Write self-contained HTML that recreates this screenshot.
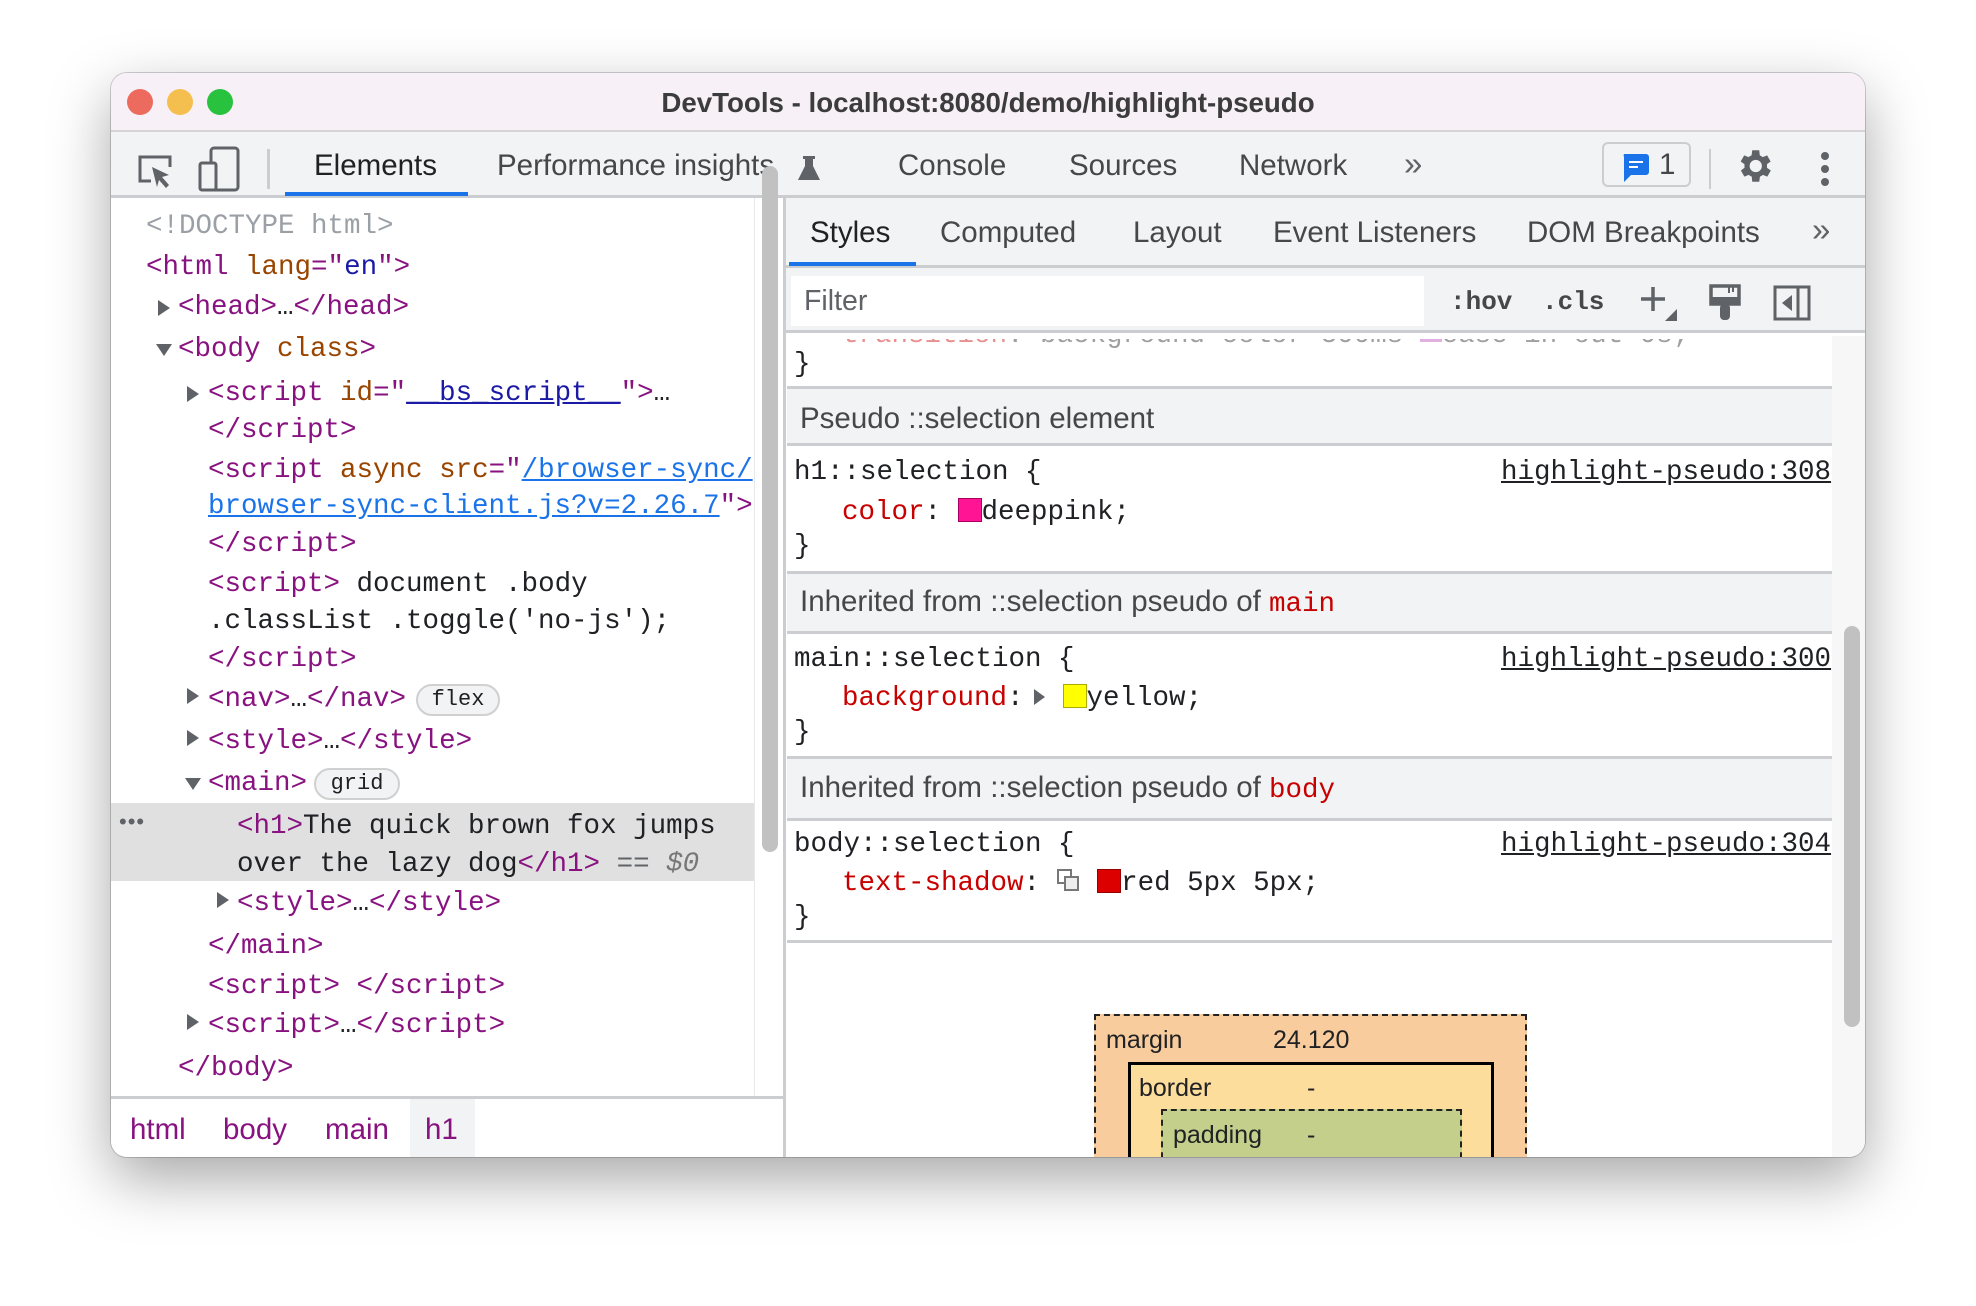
<!DOCTYPE html>
<html><head><meta charset="utf-8"><style>
*{box-sizing:border-box;margin:0;padding:0}
body{width:1976px;height:1306px;background:#fff;position:relative;overflow:hidden;font-family:"Liberation Sans",sans-serif;color:#202124}
.win{position:absolute;left:111px;top:73px;width:1754px;height:1084px;border-radius:16px;overflow:hidden;background:#fff;box-shadow:0 22px 60px rgba(0,0,0,.35),0 0 0 1px rgba(0,0,0,.18)}
.a{position:absolute;white-space:pre}
.m{font-family:"Liberation Mono",monospace;font-size:27.5px;line-height:40px;height:40px;margin-top:3px}
.s{font-size:29.5px;line-height:40px;height:40px}
.t{color:#881280}.an{color:#994500}.av{color:#1a1aa6}.lk{color:#1a73e8;text-decoration:underline}
.p{color:#c80000}
.tri{position:absolute;width:0;height:0;border-top:8px solid transparent;border-bottom:8px solid transparent;border-left:12px solid #5f6368;margin-top:3px}
.trd{position:absolute;width:0;height:0;border-left:8px solid transparent;border-right:8px solid transparent;border-top:12px solid #5f6368;margin-top:3px}
.hdr{position:absolute;left:0;width:1045px;background:#f1f3f4;border-top:3px solid #cbcdd1;border-bottom:3px solid #cbcdd1}
.pill{position:absolute;border:2px solid #d0d0d0;border-radius:16px;background:#f1f3f4;font-family:"Liberation Mono",monospace;font-size:22px;text-align:center;color:#202124}
.bx{font-size:25px}
</style></head><body>
<div class="win">
 <div class="a" style="left:0;top:0;width:1754px;height:59px;background:#f7f0f7;border-bottom:2px solid #d6d3d6"></div>
 <div class="a" style="left:16px;top:16px;width:26px;height:26px;border-radius:50%;background:#ed6a5e"></div>
 <div class="a" style="left:56px;top:16px;width:26px;height:26px;border-radius:50%;background:#f5bf4f"></div>
 <div class="a" style="left:96px;top:16px;width:26px;height:26px;border-radius:50%;background:#29c23f"></div>
 <div class="a" style="left:0;top:11px;width:1754px;text-align:center;font-size:27.7px;font-weight:bold;color:#3c3c3c;line-height:38px">DevTools - localhost:8080/demo/highlight-pseudo</div>
 <div class="a" style="left:0;top:59px;width:1754px;height:66px;background:#f1f3f4;border-bottom:3px solid #cbcdd1"></div>
 <svg class="a" style="left:24px;top:78px" width="40" height="40" viewBox="0 0 40 40"><path d="M16 30H5V6h30v10" fill="none" stroke="#5f6368" stroke-width="3"/><path d="M17 16l17 8-7 2 7 8-3 3-7-8-2 7z" fill="#5f6368"/></svg>
 <svg class="a" style="left:86px;top:72px" width="46" height="52" viewBox="0 0 46 52"><rect x="14" y="3" width="27" height="42" rx="3" fill="none" stroke="#5f6368" stroke-width="3"/><rect x="3" y="18" width="16" height="27" rx="2" fill="#f1f3f4" stroke="#5f6368" stroke-width="3"/></svg>
 <div class="a" style="left:156px;top:76px;width:3px;height:40px;background:#cbcdd1"></div>
 <div class="a s" style="left:203px;top:73px;color:#202124">Elements</div>
 <div class="a" style="left:174px;top:119px;width:183px;height:4px;background:#1a73e8"></div>
 <div class="a s" style="left:386px;top:73px;color:#474747">Performance insights</div>
 <svg class="a" style="left:686px;top:81px" width="24" height="28" viewBox="0 0 24 28"><path d="M6 2h12v3h-2v7l7 14H1l7-14V5H6z" fill="#5f6368"/></svg>
 <div class="a s" style="left:787px;top:73px;color:#474747">Console</div>
 <div class="a s" style="left:958px;top:73px;color:#474747">Sources</div>
 <div class="a s" style="left:1128px;top:73px;color:#474747">Network</div>
 <div class="a s" style="left:1293px;top:71px;color:#5f6368;font-size:33px">»</div>
 <div class="a" style="left:1491px;top:69px;width:89px;height:45px;border:2px solid #cbcdd1;border-radius:6px"></div>
 <svg class="a" style="left:1509px;top:79px" width="30" height="32" viewBox="0 0 30 32"><path d="M4 2h22a3 3 0 0 1 3 3v15a3 3 0 0 1-3 3H11l-7 7V5a3 3 0 0 1 0-3z" fill="#1a73e8"/><rect x="9" y="9" width="14" height="2" fill="#fff"/><rect x="9" y="14" width="9" height="2" fill="#fff"/></svg>
 <div class="a s" style="left:1548px;top:72px;color:#474747">1</div>
 <div class="a" style="left:1598px;top:76px;width:2px;height:40px;background:#cbcdd1"></div>
 <svg class="a" style="left:1622px;top:72px" width="42" height="42" viewBox="0 0 24 24"><path fill="#5f6368" d="M19.4 13a7.8 7.8 0 0 0 0-2l2.1-1.6-2-3.5-2.5 1a7.6 7.6 0 0 0-1.7-1L15 3h-4l-.4 2.9a7.6 7.6 0 0 0-1.7 1l-2.5-1-2 3.5L6.6 11a7.8 7.8 0 0 0 0 2l-2.1 1.6 2 3.5 2.5-1a7.6 7.6 0 0 0 1.7 1L11 21h4l.4-2.9a7.6 7.6 0 0 0 1.7-1l2.5 1 2-3.5zM13 15.5a3.5 3.5 0 1 1 0-7 3.5 3.5 0 0 1 0 7z"/></svg>
 <div class="a" style="left:1710px;top:79px;width:8px;height:8px;border-radius:50%;background:#5f6368;box-shadow:0 13px 0 #5f6368,0 26px 0 #5f6368"></div>

 <div class="a" style="left:0;top:730px;width:643px;height:78px;background:#e0e0e0"></div>
 <div class="a" style="left:651px;top:93px;width:16px;height:686px;border-radius:8px;background:#c1c1c1"></div>
 <div class="a" style="left:643px;top:125px;width:1px;height:898px;background:#e8e8e8"></div>
 <div class="a" style="left:672px;top:125px;width:3px;height:960px;background:#cbcdd1"></div>

 <div class="a m" style="left:35px;top:131px;color:#9aa0a6">&lt;!DOCTYPE html&gt;</div>
 <div class="a m" style="left:35px;top:172px"><span class="t">&lt;html</span> <span class="an">lang</span><span class="t">="</span><span class="av">en</span><span class="t">"&gt;</span></div>
 <div class="tri" style="left:47px;top:224px"></div>
 <div class="a m" style="left:67px;top:212px"><span class="t">&lt;head&gt;</span>…<span class="t">&lt;/head&gt;</span></div>
 <div class="trd" style="left:45px;top:268px"></div>
 <div class="a m" style="left:67px;top:254px"><span class="t">&lt;body</span> <span class="an">class</span><span class="t">&gt;</span></div>
 <div class="tri" style="left:76px;top:310px"></div>
 <div class="a m" style="left:97px;top:298px"><span class="t">&lt;script</span> <span class="an">id</span><span class="t">="</span><span class="av" style="text-decoration:underline">__bs_script__</span><span class="t">"&gt;</span>…</div>
 <div class="a m" style="left:97px;top:335px"><span class="t">&lt;/script&gt;</span></div>
 <div class="a m" style="left:97px;top:375px"><span class="t">&lt;script</span> <span class="an">async</span> <span class="an">src</span><span class="t">="</span><span class="lk">/browser-sync/</span></div>
 <div class="a m" style="left:97px;top:411px"><span class="lk">browser-sync-client.js?v=2.26.7</span><span class="t">"&gt;</span></div>
 <div class="a m" style="left:97px;top:449px"><span class="t">&lt;/script&gt;</span></div>
 <div class="a m" style="left:97px;top:489px"><span class="t">&lt;script&gt;</span> document .body</div>
 <div class="a m" style="left:97px;top:526px">.classList .toggle('no-js');</div>
 <div class="a m" style="left:97px;top:564px"><span class="t">&lt;/script&gt;</span></div>
 <div class="tri" style="left:76px;top:612px"></div>
 <div class="a m" style="left:97px;top:604px"><span class="t">&lt;nav&gt;</span>…<span class="t">&lt;/nav&gt;</span></div>
 <div class="pill" style="left:305px;top:611px;width:84px;height:32px;line-height:28px">flex</div>
 <div class="tri" style="left:76px;top:654px"></div>
 <div class="a m" style="left:97px;top:646px"><span class="t">&lt;style&gt;</span>…<span class="t">&lt;/style&gt;</span></div>
 <div class="trd" style="left:74px;top:702px"></div>
 <div class="a m" style="left:97px;top:688px"><span class="t">&lt;main&gt;</span></div>
 <div class="pill" style="left:203px;top:695px;width:86px;height:32px;line-height:28px">grid</div>
 <div class="a" style="left:8px;top:736px;font-size:22px;color:#5f6368;letter-spacing:1px">•••</div>
 <div class="a m" style="left:126px;top:731px"><span class="t">&lt;h1&gt;</span>The quick brown fox jumps</div>
 <div class="a m" style="left:126px;top:769px">over the lazy dog<span class="t">&lt;/h1&gt;</span> <span style="color:#5f6368">==</span> <span style="color:#777;font-style:italic">$0</span></div>
 <div class="tri" style="left:106px;top:816px"></div>
 <div class="a m" style="left:126px;top:808px"><span class="t">&lt;style&gt;</span>…<span class="t">&lt;/style&gt;</span></div>
 <div class="a m" style="left:97px;top:851px"><span class="t">&lt;/main&gt;</span></div>
 <div class="a m" style="left:97px;top:891px"><span class="t">&lt;script&gt;</span> <span class="t">&lt;/script&gt;</span></div>
 <div class="tri" style="left:76px;top:938px"></div>
 <div class="a m" style="left:97px;top:930px"><span class="t">&lt;script&gt;</span>…<span class="t">&lt;/script&gt;</span></div>
 <div class="a m" style="left:67px;top:973px"><span class="t">&lt;/body&gt;</span></div>
 <div class="a" style="left:0;top:1023px;width:672px;height:61px;background:#fff;border-top:3px solid #cbcdd1"></div>
 <div class="a" style="left:299px;top:1026px;width:65px;height:58px;background:#f1f3f4"></div>
 <div class="a s" style="left:19px;top:1037px;color:#881280">html</div>
 <div class="a s" style="left:112px;top:1037px;color:#881280">body</div>
 <div class="a s" style="left:214px;top:1037px;color:#881280">main</div>
 <div class="a s" style="left:314px;top:1037px;color:#881280">h1</div>

 <div class="a" style="left:675px;top:125px;width:1079px;height:70px;background:#f1f3f4;border-bottom:3px solid #cbcdd1"></div>
 <div class="a s" style="left:699px;top:140px;color:#202124">Styles</div>
 <div class="a" style="left:678px;top:189px;width:127px;height:4px;background:#1a73e8"></div>
 <div class="a s" style="left:829px;top:140px;color:#474747">Computed</div>
 <div class="a s" style="left:1022px;top:140px;color:#474747">Layout</div>
 <div class="a s" style="left:1162px;top:140px;color:#474747">Event Listeners</div>
 <div class="a s" style="left:1416px;top:140px;color:#474747">DOM Breakpoints</div>
 <div class="a s" style="left:1701px;top:137px;font-size:33px;color:#5f6368">»</div>
 <div class="a" style="left:675px;top:195px;width:1079px;height:65px;background:#f1f3f4;border-bottom:3px solid #cbcdd1"></div>
 <div class="a" style="left:680px;top:203px;width:633px;height:50px;background:#fff"></div>
 <div class="a s" style="left:693px;top:208px;font-size:28.5px;color:#5f6368">Filter</div>
 <div class="a m" style="left:1339px;top:206px;color:#474747;font-weight:bold;font-size:26px">:hov</div>
 <div class="a m" style="left:1431px;top:206px;color:#474747;font-weight:bold;font-size:26px">.cls</div>
 <svg class="a" style="left:1528px;top:210px" width="40" height="40" viewBox="0 0 40 40"><path d="M14 4v24M2 16h24" stroke="#5f6368" stroke-width="3.5"/><path d="M38 26v12H26z" fill="#5f6368"/></svg>
 <svg class="a" style="left:1596px;top:210px" width="36" height="40" viewBox="0 0 36 40"><path d="M4 3h28v18H4z" fill="none" stroke="#5f6368" stroke-width="3.5"/><path d="M4 14h28v7H4z" fill="#5f6368"/><path d="M22 3v7M26 3v6" stroke="#5f6368" stroke-width="2"/><rect x="13" y="21" width="10" height="16" rx="4" fill="#5f6368"/></svg>
 <svg class="a" style="left:1662px;top:212px" width="38" height="36" viewBox="0 0 38 36"><rect x="2" y="2" width="34" height="32" fill="none" stroke="#5f6368" stroke-width="3"/><path d="M25 2v32" stroke="#5f6368" stroke-width="3"/><path d="M19 10v16l-10-8z" fill="#5f6368"/></svg>

 <div class="a" style="left:675px;top:263px;width:1046px;height:821px;background:#fff"></div>
 <div class="a" style="left:1721px;top:263px;width:33px;height:821px;background:#f7f7f7"></div>
 <div class="a" style="left:1733px;top:553px;width:16px;height:401px;border-radius:8px;background:#c1c1c1"></div>
 <div class="a m" style="left:731px;top:240px;color:#a0a0a0;clip-path:inset(23px 0 0 0)"><span style="color:#e89090">transition</span>: background-color 300ms <span style="display:inline-block;width:22px;height:18px;background:#e0b0e0"></span>ease-in-out 0s;</div>
 <div class="a m" style="left:683px;top:269px">}</div>
 <div class="hdr" style="left:676px;top:313px;height:60px"></div>
 <div class="a s" style="left:689px;top:326px;color:#474747">Pseudo ::selection element</div>
 <div class="a m" style="left:683px;top:377px">h1::selection {</div>
 <div class="a m" style="left:1390px;top:377px;text-decoration:underline;width:327px;text-align:right">highlight-pseudo:308</div>
 <div class="a m" style="left:731px;top:417px"><span class="p">color</span>: <span style="display:inline-block;width:24px;height:24px;background:#ff1493;border:1px solid #a06;vertical-align:-3px"></span>deeppink;</div>
 <div class="a m" style="left:683px;top:451px">}</div>
 <div class="hdr" style="left:676px;top:498px;height:63px"></div>
 <div class="a s" style="left:689px;top:509px;color:#474747">Inherited from ::selection pseudo of <span class="p" style="font-family:'Liberation Mono',monospace;font-size:27.5px">main</span></div>
 <div class="a m" style="left:683px;top:564px">main::selection {</div>
 <div class="a m" style="left:1390px;top:564px;text-decoration:underline;width:327px;text-align:right">highlight-pseudo:300</div>
 <div class="a m" style="left:731px;top:603px"><span class="p">background</span>:<span style="display:inline-block;width:0;height:0;margin-left:10px;border-top:8px solid transparent;border-bottom:8px solid transparent;border-left:11px solid #5f6368"></span><span style="display:inline-block;width:24px;height:24px;margin-left:18px;background:#ff0;border:1px solid #aa0;vertical-align:-3px"></span>yellow;</div>
 <div class="a m" style="left:683px;top:637px">}</div>
 <div class="hdr" style="left:676px;top:683px;height:65px"></div>
 <div class="a s" style="left:689px;top:695px;color:#474747">Inherited from ::selection pseudo of <span class="p" style="font-family:'Liberation Mono',monospace;font-size:27.5px">body</span></div>
 <div class="a m" style="left:683px;top:749px">body::selection {</div>
 <div class="a m" style="left:1390px;top:749px;text-decoration:underline;width:327px;text-align:right">highlight-pseudo:304</div>
 <div class="a m" style="left:731px;top:788px"><span class="p">text-shadow</span>: <span style="display:inline-block;width:24px;height:24px;vertical-align:-3px;position:relative"><span style="position:absolute;left:0;top:0;width:15px;height:15px;border:2px solid #777;background:#fff"></span><span style="position:absolute;left:7px;top:7px;width:15px;height:15px;border:2px solid #777;background:#eee"></span></span> <span style="display:inline-block;width:24px;height:24px;background:#d00;border:1px solid #900;vertical-align:-3px"></span>red 5px 5px;</div>
 <div class="a m" style="left:683px;top:822px">}</div>
 <div class="a" style="left:676px;top:867px;width:1045px;height:3px;background:#cbcdd1"></div>
 <div class="a" style="left:983px;top:941px;width:433px;height:150px;background:#f9cc9d;border:2px dashed #222"></div>
 <div class="a bx" style="left:995px;top:953px;color:#202124">margin</div>
 <div class="a bx" style="left:1162px;top:953px;color:#202124">24.120</div>
 <div class="a" style="left:1017px;top:989px;width:366px;height:100px;background:#fddd9b;border:3px solid #000;border-bottom:none"></div>
 <div class="a bx" style="left:1028px;top:1001px;color:#202124">border</div>
 <div class="a bx" style="left:1196px;top:1001px;color:#202124">-</div>
 <div class="a" style="left:1050px;top:1036px;width:301px;height:60px;background:#c3cf8a;border:2px dashed #222;border-bottom:none"></div>
 <div class="a bx" style="left:1062px;top:1048px;color:#202124">padding</div>
 <div class="a bx" style="left:1196px;top:1048px;color:#202124">-</div>
</div>
</body></html>
